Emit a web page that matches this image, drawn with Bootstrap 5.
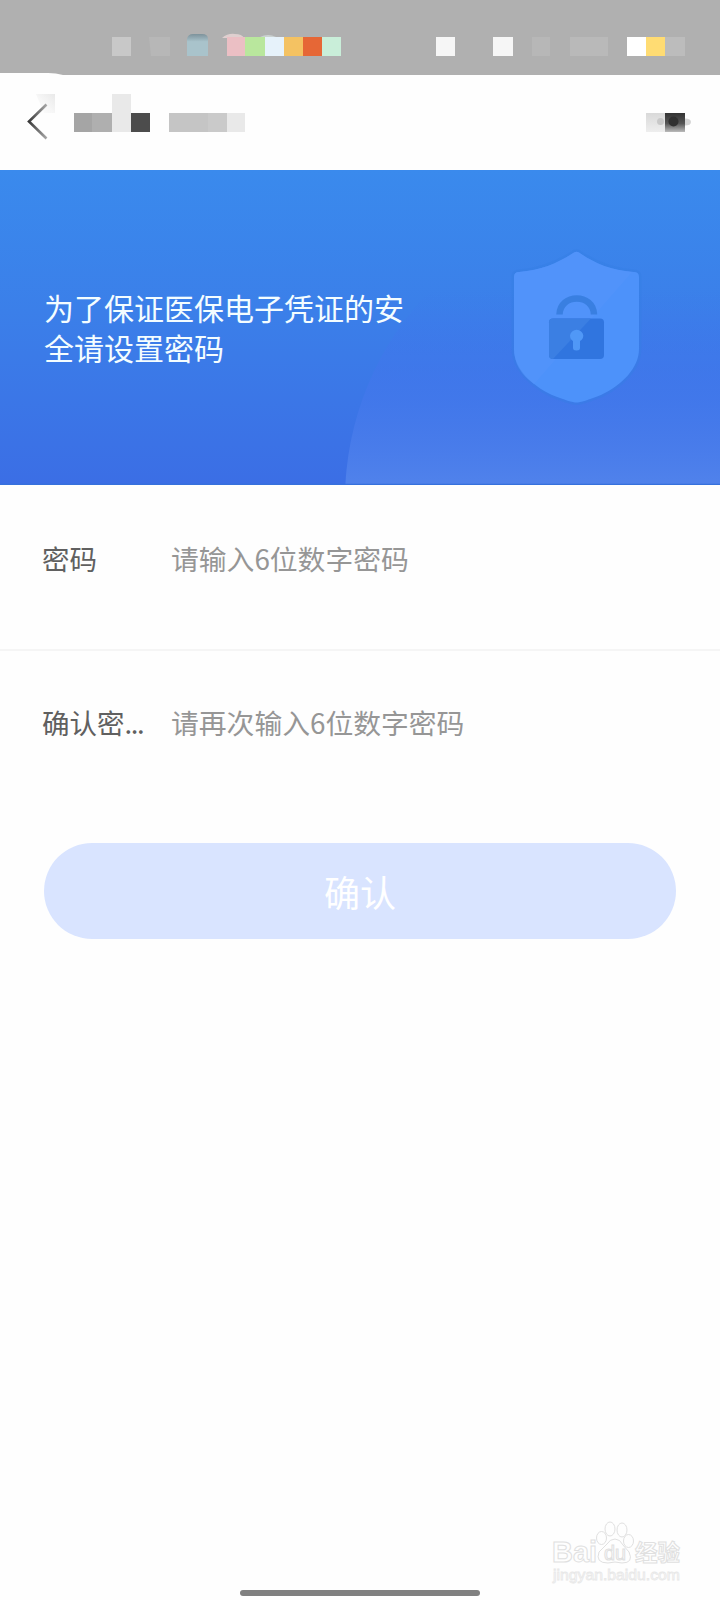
<!DOCTYPE html>
<html lang="zh-CN">
<head>
<meta charset="utf-8">
<meta name="viewport" content="width=device-width, initial-scale=1">
<title>设置密码</title>
<link href="https://cdn.jsdelivr.net/npm/bootstrap@5.3.0/dist/css/bootstrap.min.css" rel="stylesheet">
<style>
body{font-family:"Noto Sans CJK SC",sans-serif;background:#fefefe}
.screen{width:720px;height:1600px}
.status-strip{height:75px;background:#b0b0b0}
.title-strip{height:95px}
.hero{height:315px;background:linear-gradient(180deg,#3a8aed 0%,#3b7fe9 45%,#3b6ee5 100%)}
.hero-text{width:362px;margin:-2px 0 0 44px;font-size:30px;line-height:40px;color:#f4fdff;font-weight:400}
.field-row{height:166px;padding:52px 42px 0;font-size:28px;line-height:42px}
.field-row + .field-row{height:192px;padding-top:50px}
.line-below{border-bottom:2px solid #f5f5f5}
.field-label{width:129px;flex:none;color:#606060;font-size:27.5px}
.ellipsis-tight{letter-spacing:-1.4px}
.field-input{font-size:27.8px;line-height:42px;color:#999}
.field-input::placeholder{color:#969696;opacity:1}
.confirm{margin:0 44px;height:96px;font-size:36px;line-height:54px;padding-top:5px;background:#d9e4ff;color:#fff;border:0}
.home-bar{width:240px;height:6px;background:#808080;margin-bottom:4px}
svg{display:block}
</style>
</head>
<body>
<div class="screen d-flex flex-column overflow-hidden position-relative">
  <header>
    <div class="status-strip">
      <svg width="720" height="75" viewBox="0 0 720 75">
        <defs><linearGradient id="cap" x2="0" y2="1"><stop stop-color="#7d929b"/><stop offset=".35" stop-color="#a9c3cb"/><stop offset="1" stop-color="#a9c3cb"/></linearGradient></defs>
        <path fill="#fefefe" d="M0 73h48q8 0 15 2H0z"/>
        <path fill="#c8c8c8" d="M112 37h19v19h-19z"/>
        <path fill="#b7b7b7" d="M149 37h21v19h-19z"/>
        <path fill="url(#cap)" d="M187 56V39q1-5 6-5h9q6 0 6 5v17z"/>
        <path fill="#dfcfcf" d="M222 38q6-5 13-4 7 0 9 4z"/><path fill="#cbd2d1" d="M260 37q8-4 16 0z"/>
        <path fill="#ebbfc4" d="M227 37h19v19h-19z"/><path fill="#b9e79d" d="M245 37h20v19h-20z"/>
        <path fill="#e6f2fa" d="M265 37h19v19h-19z"/><path fill="#f4c262" d="M284 37h19v19h-19z"/>
        <path fill="#e66736" d="M303 37h19v19h-19z"/><path fill="#c9eed9" d="M322 37h19v19h-19z"/>
        <path fill="#f6f6f6" d="M436 37h19v19h-19zM493 37h20v19h-20z"/>
        <path fill="#b7b7b7" d="M532 37h18v19h-18z"/><path fill="#b9b9b9" d="M570 37h38v19h-38z"/>
        <path fill="#fff" d="M627 37h19v19h-19z"/><path fill="#ffdc73" d="M646 37h19v19h-19z"/><path fill="#bcbcbc" d="M665 37h20v19h-20z"/>
      </svg>
    </div>
    <div class="title-strip">
      <svg width="720" height="95" viewBox="0 75 720 95">
        <defs>
          <linearGradient id="fade" x1="0" y1="1" x2="1" y2="0"><stop stop-color="#fefefe"/><stop offset=".5" stop-color="#f6f6f6"/><stop offset="1" stop-color="#e9e9e9"/></linearGradient>
          <linearGradient id="arrow" gradientUnits="userSpaceOnUse" x1="28" y1="0" x2="47" y2="0"><stop stop-color="#333"/><stop offset="1" stop-color="#aaa"/></linearGradient>
          <linearGradient id="dark" x2="0" y2="1"><stop stop-color="#333"/><stop offset=".55" stop-color="#555"/><stop offset="1" stop-color="#bbb"/></linearGradient>
          <linearGradient id="pale" x2="0" y2="1"><stop stop-color="#d9d9d9"/><stop offset="1" stop-color="#eee"/></linearGradient>
        </defs>
        <path fill="url(#fade)" d="M36 94h19v19H44z"/>
        <path d="M46.500 104.500L29 121.500L46.500 138.500" fill="none" stroke="url(#arrow)" stroke-width="2.600"/>
        <path fill="#a5a5a5" d="M74 113h18v19H74z"/><path fill="#afafaf" d="M92 113h20v19H92z"/>
        <path fill="#e9e9e9" d="M112 94h19v38h-19z"/><path fill="#4c4c4c" d="M131 113h19v19h-19z"/>
        <path fill="#c5c5c5" d="M169 113h39v19h-39z"/><path fill="#cacaca" d="M208 113h19v19h-19z"/><path fill="#e9e9e9" d="M227 113h18v19h-18z"/>
        <path fill="url(#pale)" d="M646 113h19v19h-19z"/><circle cx="660.500" cy="121.500" r="3.500" fill="#c8c8c8"/>
        <path fill="url(#dark)" d="M665 113h20v19h-20z"/><circle cx="673.500" cy="121.500" r="5" fill="#303030"/>
        <path fill="#d5d5d5" d="M685 118.500q6 0 6 3.500t-6 3.500z"/>
      </svg>
    </div>
  </header>

  <section class="hero position-relative d-flex align-items-center">
    <svg class="position-absolute top-0 start-0" width="720" height="315" viewBox="0 170 720 315">
      <defs>
        <linearGradient id="orb" gradientUnits="userSpaceOnUse" x1="0" y1="290" x2="0" y2="485"><stop stop-color="#4070ee" stop-opacity="0"/><stop offset=".55" stop-color="#4478ec" stop-opacity=".65"/><stop offset="1" stop-color="#5082eb"/></linearGradient>
      </defs>
      <circle cx="645" cy="500" r="300" fill="url(#orb)"/>
      <path d="M574 252.500Q576.500 251 579 252.500C594 263 610 270 634 272Q639 272 639 277V349C639 368 622 385 601 395Q582 402.500 576.500 402.500Q571 402.500 552 395C531 385 514 368 514 349V277Q514 272 519 272C542 270 558 263 574 252.500Z" fill="#4d92fa" stroke="#357ee5" stroke-opacity=".45" stroke-width="5" paint-order="stroke"/>
      <path d="M574 252.500Q576.500 251 579 252.500C594 263 610 270 632 272L534 384Q514 370 514 349V277Q514 272 519 272C542 270 558 263 574 252.500Z" fill="#5595fa" fill-opacity=".6"/>
      <path d="M559.500 314.500C560 293 593.500 293 594 314.500" fill="none" stroke="#397fe1" stroke-width="6.500"/>
      <rect x="549" y="318.500" width="55" height="40.500" rx="4" fill="#3075df"/>
      <path d="M553 318.500H591L553 359Q549 359 549 355V322.500Q549 318.500 553 318.500Z" fill="#3b7fe3"/>
      <path d="M573 348V341Q570 339 570 335.500A6.700 6.500 0 0 1 583.300 335.500Q583.300 339 580 341V348Q580 350.500 576.500 350.500T573 348Z" fill="#5098f7"/>
      <path d="M0 484.500h720" stroke="#3671dc" stroke-width="1.500"/>
    </svg>
    <div class="hero-text position-relative">为了保证医保电子凭证的安全请设置密码</div>
  </section>

  <form>
    <div class="field-row line-below d-flex align-items-start">
      <label class="field-label" for="pwd">密码</label>
      <input id="pwd" class="field-input form-control border-0 rounded-0 p-0 bg-transparent shadow-none" placeholder="请输入6位数字密码">
    </div>
    <div class="field-row d-flex align-items-start">
      <label class="field-label" for="again">确认密<span class="ellipsis-tight">...</span></label>
      <input id="again" class="field-input form-control border-0 rounded-0 p-0 bg-transparent shadow-none" placeholder="请再次输入6位数字密码">
    </div>
    <div class="d-grid"><button type="button" class="confirm btn rounded-pill">确认</button></div>
  </form>

  <footer class="mt-auto d-flex flex-column">
    <svg class="align-self-end me-4" width="152" height="74" viewBox="544 1516 152 74" fill="#fefefe" stroke="#e0e0e0" stroke-width="1">
      <text x="552" y="1562" font-family="Liberation Sans" font-weight="700" font-size="29" textLength="45" lengthAdjust="spacingAndGlyphs">Bai</text>
      <ellipse cx="601.500" cy="1538" rx="5" ry="6.500"/><ellipse cx="610" cy="1529" rx="5" ry="7"/><ellipse cx="622" cy="1530" rx="5" ry="7"/><ellipse cx="628.500" cy="1541" rx="5" ry="6.500"/>
      <path d="M615 1539Q620 1539 623 1545L629 1552Q634 1563 622 1563Q615 1561 608 1563Q595 1563 599 1552L607 1544Q610 1539 615 1539Z"/>
      <text x="604" y="1560" font-family="Liberation Sans" font-weight="400" font-size="20" textLength="22" lengthAdjust="spacingAndGlyphs">du</text>
      <text x="635" y="1561" font-family="Noto Sans CJK SC" font-weight="700" font-size="22.500" textLength="45">经验</text>
      <text x="553" y="1580" font-family="Liberation Sans" font-size="14.500" textLength="127" lengthAdjust="spacingAndGlyphs" stroke="#e8e8e8" stroke-width=".8">jingyan.baidu.com</text>
    </svg>
    <div class="home-bar rounded-pill align-self-center"></div>
  </footer>
</div>
<script src="https://cdn.jsdelivr.net/npm/bootstrap@5.3.0/dist/js/bootstrap.bundle.min.js"></script>
</body>
</html>
